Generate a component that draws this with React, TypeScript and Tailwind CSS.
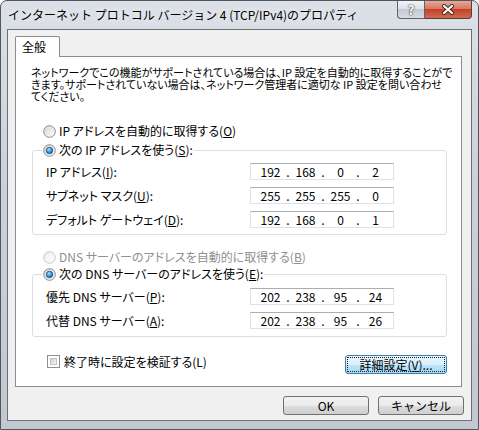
import React from 'react';

function Radio({ checked, disabled, id }: { checked?: boolean; disabled?: boolean; id: string }) {
    return (
        <svg width="13" height="13" viewBox="0 0 13 13" className="shrink-0">
            <defs>
                <linearGradient id={`rf-${id}`} x1="0" y1="0" x2="1" y2="1">
                    <stop offset="0" stopColor={disabled ? '#eeeeee' : '#d6d6d6'} />
                    <stop offset="1" stopColor="#ffffff" />
                </linearGradient>
                <radialGradient id={`rd-${id}`} cx="0.4" cy="0.35" r="0.7">
                    <stop offset="0" stopColor="#a9e2ff" />
                    <stop offset="0.5" stopColor="#3d9be0" />
                    <stop offset="1" stopColor="#145a9c" />
                </radialGradient>
            </defs>
            <circle cx="6.5" cy="6.5" r="5.8" fill={`url(#rf-${id})`} stroke={disabled ? '#c6c6c6' : '#8a8a8a'} strokeWidth="1" />
            {checked && <circle cx="6.5" cy="6.5" r="3.3" fill={`url(#rd-${id})`} stroke="#1c4f80" strokeWidth="0.7" />}
        </svg>
    );
}

function Mn({ t, k, tail = '' }: { t: string; k: string; tail?: string }) {
    return (
        <span>
            {t}(<span className="underline underline-offset-[1px]">{k}</span>){tail}
        </span>
    );
}

function IpField({ parts }: { parts: string[] }) {
    return (
        <div className="flex items-center w-[144px] h-[17px] bg-white border border-[#dde2e8] border-t-[#abadb3] pl-[6px] text-[12px] leading-none">
            {parts.map((p, i) => (
                <React.Fragment key={i}>
                    <span className="w-[27px] text-center">{p}</span>
                    {i < 3 && <span className="w-[8px] text-center">.</span>}
                </React.Fragment>
            ))}
        </div>
    );
}

function Row({ label, parts }: { label: React.ReactNode; parts: string[] }) {
    return (
        <div className="flex items-center h-[17px]">
            <div className="w-[217px] pl-[13px] whitespace-nowrap">{label}</div>
            <IpField parts={parts} />
        </div>
    );
}

function WinButton({ children, w, focused }: { children: React.ReactNode; w: string; focused?: boolean }) {
    return (
        <div
            className={`${w} h-[19px] rounded-[3px] border flex items-center justify-center p-[2px] ${
                focused
                    ? 'border-[#3c7fb1] bg-[linear-gradient(#eaf6fd_0%,#d9f0fc_50%,#bee6fd_50%,#a7d9f5_100%)]'
                    : 'border-[#707070] bg-[linear-gradient(#f2f2f2_0%,#ebebeb_50%,#dddddd_50%,#cfcfcf_100%)]'
            }`}
        >
            <div className={`w-full h-full flex items-center justify-center ${focused ? 'outline-1 outline-dotted outline-[#222]' : ''}`}>
                {children}
            </div>
        </div>
    );
}

export default function App() {
    return (
        <div className="w-[479px] h-[430px] bg-white [font-family:'Noto_Sans_CJK_JP',sans-serif] text-black">
            <div className="w-[479px] h-[430px] rounded-t-[7px] border border-[#50565e] bg-[linear-gradient(#dce1e7,#ccd2d9_40%,#c1c8d0)] flex flex-col">
                {/* Title bar */}
                <div className="h-[28px] flex items-start shrink-0">
                    <div className="pl-[7px] pt-[5px] text-[12px] leading-[18px] whitespace-nowrap [text-shadow:0_0_6px_#ffffff]">
                        インターネット プロトコル バージョン 4 (TCP/IPv4)のプロパティ
                    </div>
                    <div className="ml-auto mr-[6px] flex">
                        <div className="w-[28px] h-[18px] rounded-bl-[4px] border border-t-0 border-[#5c636c] bg-[linear-gradient(#f2f4f6,#dde2e7_45%,#c2c9d1_50%,#d6dce2)] flex items-center justify-center text-white font-bold text-[13px] leading-none [text-shadow:0_0_2px_#333,0_0_1px_#333]">
                            ?
                        </div>
                        <div className="w-[47px] h-[18px] rounded-br-[4px] border border-t-0 border-l-0 border-[#5c3a35] bg-[linear-gradient(#e9a99a,#d9785f_45%,#c4402a_50%,#d26a52)] flex items-center justify-center">
                            <svg width="14" height="11" viewBox="0 0 14 11">
                                <path d="M3 2 L11 9 M11 2 L3 9" stroke="#3b2420" strokeWidth="4" strokeLinecap="round" />
                                <path d="M3 2 L11 9 M11 2 L3 9" stroke="#ffffff" strokeWidth="2.2" strokeLinecap="round" />
                            </svg>
                        </div>
                    </div>
                </div>

                {/* Client area */}
                <div className="mx-[6px] h-[392px] border border-[#6b7078] bg-[#f0f0f0] flex flex-col text-[12px] leading-[12px]">
                    <div className="ml-[7px] mt-[6px] w-[45px] h-[21px] -mb-[1px] relative z-10 bg-white border border-b-0 border-[#898c95] rounded-t-[2px] pl-[6px] pt-[4px]">
                        全般
                    </div>
                    <div className="ml-[7px] w-[447px] h-[331px] bg-white border border-[#898c95] flex flex-col [font-feature-settings:'palt']">
                        <div className="pl-[15px] pt-[9px] whitespace-nowrap text-[11px] leading-[12px]">
                            <div>ネットワークでこの機能がサポートされている場合は、IP 設定を自動的に取得することがで</div>
                            <div>きます。サポートされていない場合は、ネットワーク管理者に適切な IP 設定を問い合わせ</div>
                            <div>てください。</div>
                        </div>

                        <div className="mt-[21px] pl-[27px] h-[16px] flex items-center gap-[3px]">
                            <Radio id="a" />
                            <Mn t="IP アドレスを自動的に取得する" k="O" />
                        </div>

                        <fieldset className="mt-[3px] ml-[16px] w-[415px] border border-[#d5dfe5] rounded-[3px] pb-[6px]">
                            <legend className="ml-[9px] px-[1px] h-[16px] flex items-center gap-[3px]">
                                <Radio id="b" checked />
                                <Mn t="次の IP アドレスを使う" k="S" tail=":" />
                            </legend>
                            <div className="mt-[5px] flex flex-col gap-[7px]">
                                <Row label={<Mn t="IP アドレス" k="I" tail=":" />} parts={['192', '168', '0', '2']} />
                                <Row label={<Mn t="サブネット マスク" k="U" tail=":" />} parts={['255', '255', '255', '0']} />
                                <Row label={<Mn t="デフォルト ゲートウェイ" k="D" tail=":" />} parts={['192', '168', '0', '1']} />
                            </div>
                        </fieldset>

                        <div className="mt-[14px] pl-[27px] h-[16px] flex items-center gap-[3px] text-[#8f8f8f]">
                            <Radio id="c" disabled />
                            <Mn t="DNS サーバーのアドレスを自動的に取得する" k="B" />
                        </div>

                        <fieldset className="mt-[1px] ml-[16px] w-[415px] border border-[#d5dfe5] rounded-[3px] pb-[7px]">
                            <legend className="ml-[9px] px-[1px] h-[16px] flex items-center gap-[3px]">
                                <Radio id="d" checked />
                                <Mn t="次の DNS サーバーのアドレスを使う" k="E" tail=":" />
                            </legend>
                            <div className="mt-[6px] flex flex-col gap-[7px]">
                                <Row label={<Mn t="優先 DNS サーバー" k="P" tail=":" />} parts={['202', '238', '95', '24']} />
                                <Row label={<Mn t="代替 DNS サーバー" k="A" tail=":" />} parts={['202', '238', '95', '26']} />
                            </div>
                        </fieldset>

                        <div className="mt-[18px] flex items-start justify-between pl-[31px] pr-[14px]">
                            <div className="mt-[0px] flex items-center gap-[4px] h-[13px]">
                                <div className="w-[13px] h-[13px] border border-[#8e8f8f] bg-white p-[2px]">
                                    <div className="w-full h-full bg-[linear-gradient(135deg,#cbcfd5,#f6f6f6)] border border-[#bfc3c9]" />
                                </div>
                                <span>終了時に設定を検証する(L)</span>
                            </div>
                            <WinButton w="w-[102px]" focused>
                                <Mn t="詳細設定" k="V" tail="..." />
                            </WinButton>
                        </div>
                    </div>

                    <div className="mt-[9px] mr-[7px] flex justify-end gap-[9px]">
                        <WinButton w="w-[86px]">OK</WinButton>
                        <WinButton w="w-[86px]">キャンセル</WinButton>
                    </div>
                </div>
            </div>
        </div>
    );
}
